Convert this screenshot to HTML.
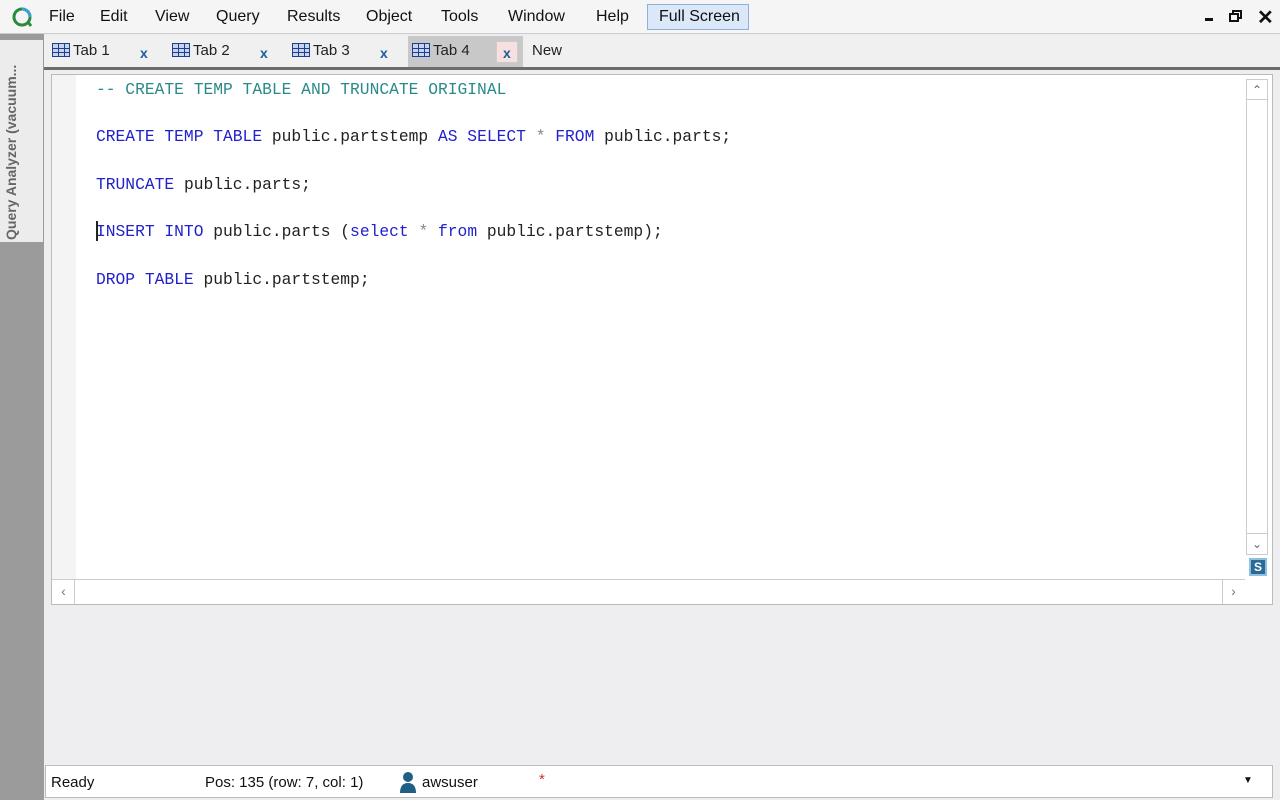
<!DOCTYPE html>
<html><head><meta charset="utf-8"><style>
*{margin:0;padding:0;box-sizing:border-box}
body{width:1280px;height:800px;overflow:hidden;background:#eeeef0;font-family:"Liberation Sans",sans-serif;position:relative}
.abs{position:absolute}
.menu{left:0;top:0;width:1280px;height:34px;background:#f5f5f5;border-bottom:1px solid #ccc}
.menu span{position:absolute;top:8px;font-size:16px;color:#111}
.side{left:0;top:34px;width:44px;height:766px;background:#9b9b9b}
.sidetop{left:0;top:40px;width:43px;height:202px;background:#ececec}
.vt{left:3px;top:240px;transform-origin:0 0;transform:rotate(-90deg);font-size:14px;font-weight:bold;color:#666;white-space:nowrap;width:200px}
.tabs{left:44px;top:36px;width:1236px;height:34px;background:#f0f0f0;border-bottom:3px solid #6d6d6d}
.tab{position:absolute;top:6px;font-size:15px;color:#222}
.x{position:absolute;top:9px;font-size:14px;color:#1a5f9a;font-weight:bold}
.grid{display:inline-block;width:18px;height:14px;border:1px solid #1d3f8c;background:linear-gradient(#1d3f8c,#1d3f8c) 0 4px/100% 1px no-repeat,linear-gradient(#1d3f8c,#1d3f8c) 0 8px/100% 1px no-repeat,linear-gradient(90deg,#1d3f8c,#1d3f8c) 5px 0/1px 100% no-repeat,linear-gradient(90deg,#1d3f8c,#1d3f8c) 11px 0/1px 100% no-repeat,#c8d4ee;vertical-align:-2px;margin-right:3px}
.editor{left:51px;top:74px;width:1222px;height:531px;background:#fff;border:1px solid #bbb}
.gutter{left:52px;top:75px;width:24px;height:504px;background:#f4f4f4}
pre{position:absolute;left:96px;font-family:"Liberation Mono",monospace;font-size:16.3px;color:#222;line-height:20px}
.k{color:#2222cc}.c{color:#2a8a8a}.g{color:#888}
.vs{left:1246px;top:79px;width:22px;height:476px;border:1px solid #ccc;background:#fff}
.hs{left:52px;top:579px;width:1193px;height:25px;border-top:1px solid #ccc;background:#fff}
.status{left:45px;top:765px;width:1228px;height:33px;background:#fff;border:1px solid #bbb;font-size:15px}
.status span{position:absolute;top:8px;color:#111}
</style></head><body>
<div class="abs menu">
<svg class="abs" style="left:11px;top:6px" width="22" height="22" viewBox="0 0 22 22"><circle cx="11" cy="11" r="8" fill="none" stroke="#2b8a3e" stroke-width="3"/><path d="M11 3a8 8 0 0 1 8 8" stroke="#3aa0d8" stroke-width="3" fill="none"/><path d="M17 16l3 4" stroke="#2b8a3e" stroke-width="3"/></svg>
<span style="left:49px">File</span><span style="left:100px">Edit</span><span style="left:155px">View</span><span style="left:216px">Query</span><span style="left:287px">Results</span><span style="left:366px">Object</span><span style="left:441px">Tools</span><span style="left:508px">Window</span><span style="left:596px">Help</span>
<div class="abs" style="left:647px;top:4px;width:102px;height:26px;background:#dbe8f8;border:1px solid #8fb0d8"></div><span style="left:659px">Full Screen</span>
<div class="abs" style="left:1205px;top:18px;width:8px;height:3px;background:#111"></div>
<div class="abs" style="left:1232px;top:10px;width:10px;height:9px;border:2px solid #111"></div>
<div class="abs" style="left:1229px;top:13px;width:10px;height:9px;border:2px solid #111;background:#f5f5f5"></div>
<span style="left:1257px;top:5px;font-size:20px;font-weight:bold">✕</span>
</div>
<div class="abs side"></div><div class="abs sidetop"></div>
<div class="abs vt">Query Analyzer (vacuum...</div>
<div class="abs tabs">
<span class="tab" style="left:8px"><i class="grid"></i>Tab 1</span><span class="x" style="left:96px">x</span>
<span class="tab" style="left:128px"><i class="grid"></i>Tab 2</span><span class="x" style="left:216px">x</span>
<span class="tab" style="left:248px"><i class="grid"></i>Tab 3</span><span class="x" style="left:336px">x</span>
<div class="abs" style="left:364px;top:0;width:115px;height:31px;background:#c8c8c8"></div>
<span class="tab" style="left:368px"><i class="grid"></i>Tab 4</span>
<div class="abs" style="left:452px;top:5px;width:22px;height:22px;background:#f9e0e0;border:1px solid #ccc"></div><span class="x" style="left:459px">x</span>
<span class="tab" style="left:488px">New</span>
</div>
<div class="abs editor"></div><div class="abs gutter"></div>
<pre style="top:80px" class="c">-- CREATE TEMP TABLE AND TRUNCATE ORIGINAL</pre>
<pre style="top:127px"><span class="k">CREATE TEMP TABLE</span> public.partstemp <span class="k">AS SELECT</span> <span class="g">*</span> <span class="k">FROM</span> public.parts;</pre>
<pre style="top:175px"><span class="k">TRUNCATE</span> public.parts;</pre>
<pre style="top:222px"><span class="k">INSERT INTO</span> public.parts (<span class="k">select</span> <span class="g">*</span> <span class="k">from</span> public.partstemp);</pre>
<div class="abs" style="left:96px;top:221px;width:2px;height:20px;background:#222"></div>
<pre style="top:270px"><span class="k">DROP TABLE</span> public.partstemp;</pre>
<div class="abs vs"></div>
<div class="abs" style="left:1247px;top:80px;width:20px;height:20px;border-bottom:1px solid #ccc;font-size:12px;color:#666;text-align:center;line-height:20px">⌃</div>
<div class="abs" style="left:1247px;top:533px;width:20px;height:21px;border-top:1px solid #ccc;font-size:12px;color:#666;text-align:center;line-height:20px">⌄</div>
<div class="abs" style="left:1249px;top:558px;width:18px;height:18px;background:#2b6a94;border:2px solid #8fc0e0;color:#fff;font-size:12px;font-weight:bold;text-align:center;line-height:14px">S</div>
<div class="abs hs"></div>
<div class="abs" style="left:53px;top:580px;width:22px;height:24px;border-right:1px solid #ccc;color:#777;font-size:14px;text-align:center;line-height:22px">‹</div>
<div class="abs" style="left:1222px;top:580px;width:22px;height:24px;border-left:1px solid #ccc;color:#777;font-size:14px;text-align:center;line-height:22px">›</div>
<div class="abs status">
<span style="left:5px">Ready</span><span style="left:159px">Pos: 135 (row: 7, col: 1)</span>
<svg class="abs" style="left:353px;top:5px" width="18" height="22" viewBox="0 0 18 22"><circle cx="9" cy="6" r="5" fill="#1f5f85"/><path d="M1 22c0-8 4-10 8-10s8 2 8 10z" fill="#1f5f85"/></svg>
<span style="left:376px">awsuser</span><span style="left:493px;color:#c33;top:5px">*</span>
<span style="left:1197px;top:9px;font-size:10px">▼</span>
</div>
</body></html>
